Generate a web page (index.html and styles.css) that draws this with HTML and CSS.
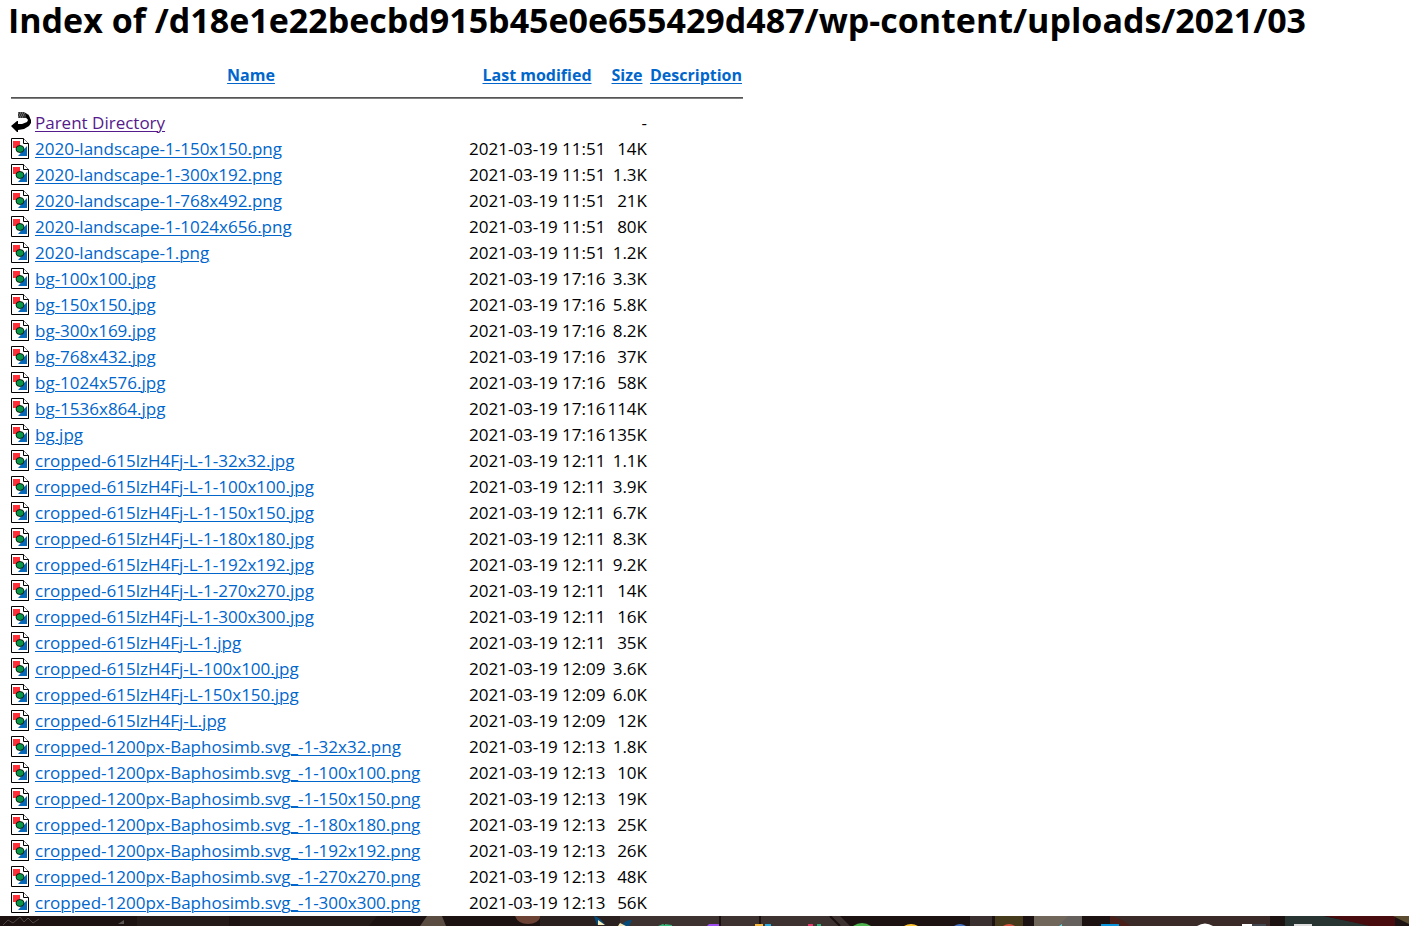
FILE: index.html
```
<!DOCTYPE html>
<html lang="en">
<head>
<meta charset="utf-8">
<title>Index of /d18e1e22becbd915b45e0e655429d487/wp-content/uploads/2021/03</title>
<link rel="stylesheet" href="styles.css">
</head>
<body>
<svg class="sprite" aria-hidden="true">
<symbol id="img" viewBox="0 0 20 22">
<path d="M.5.5h12l5 5v15H.5z" fill="#fff" stroke="#000"/>
<path d="M17.500 6v14.500H1" fill="none" stroke="#000"/>
<path d="M12.500.5v5h5" fill="#fff" stroke="#000"/>
<path d="M2 3h7v7H2z" fill="#ff3038"/>
<path d="M16 8v10H7z" fill="#0868b8"/>
<ellipse cx="9" cy="11" rx="4" ry="3.500" fill="#089848" stroke="#000" stroke-width=".8"/>
</symbol>
<symbol id="back" viewBox="0 0 20 22">
<path d="M7 0h6l5 3 1 5-4-2H7z" fill="#333"/>
<path d="M7 1h1m1 0h1m1 0h1m1 0h1M8 3h1m1 0h1m1 0h1m1 0h1M7 5h1m1 0h1m1 0h1" stroke="#999"/>
<path d="M14 1l4 3 2 4v3l-2 3-5 3-6 1v2H6l-6-6 6-5h1v3h4l5-2 1-2-2-3z" fill="#000"/>
</symbol>
</svg>
<main>
<h1>Index of /d18e1e22becbd915b45e0e655429d487/wp-content/uploads/2021/03</h1>
<table>
<colgroup><col class="c-icon"><col class="c-name"><col class="c-date"><col class="c-size"><col class="c-desc"></colgroup>
<thead>
<tr><th></th><th><a href="#name">Name</a></th><th><a href="#modified">Last modified</a></th><th><a href="#size">Size</a></th><th><a href="#description">Description</a></th></tr>
<tr><td colspan="5"><hr></td></tr>
</thead>
<tbody>
<tr><td><svg><use href="#back"/></svg></td><td><a class="visited" href="#parent">Parent Directory</a></td><td></td><td>-</td><td></td></tr>
<tr><td><svg><use href="#img"/></svg></td><td><a href="#f">2020-landscape-1-150x150.png</a></td><td>2021-03-19 11:51</td><td>14K</td><td></td></tr>
<tr><td><svg><use href="#img"/></svg></td><td><a href="#f">2020-landscape-1-300x192.png</a></td><td>2021-03-19 11:51</td><td>1.3K</td><td></td></tr>
<tr><td><svg><use href="#img"/></svg></td><td><a href="#f">2020-landscape-1-768x492.png</a></td><td>2021-03-19 11:51</td><td>21K</td><td></td></tr>
<tr><td><svg><use href="#img"/></svg></td><td><a href="#f">2020-landscape-1-1024x656.png</a></td><td>2021-03-19 11:51</td><td>80K</td><td></td></tr>
<tr><td><svg><use href="#img"/></svg></td><td><a href="#f">2020-landscape-1.png</a></td><td>2021-03-19 11:51</td><td>1.2K</td><td></td></tr>
<tr><td><svg><use href="#img"/></svg></td><td><a href="#f">bg-100x100.jpg</a></td><td>2021-03-19 17:16</td><td>3.3K</td><td></td></tr>
<tr><td><svg><use href="#img"/></svg></td><td><a href="#f">bg-150x150.jpg</a></td><td>2021-03-19 17:16</td><td>5.8K</td><td></td></tr>
<tr><td><svg><use href="#img"/></svg></td><td><a href="#f">bg-300x169.jpg</a></td><td>2021-03-19 17:16</td><td>8.2K</td><td></td></tr>
<tr><td><svg><use href="#img"/></svg></td><td><a href="#f">bg-768x432.jpg</a></td><td>2021-03-19 17:16</td><td>37K</td><td></td></tr>
<tr><td><svg><use href="#img"/></svg></td><td><a href="#f">bg-1024x576.jpg</a></td><td>2021-03-19 17:16</td><td>58K</td><td></td></tr>
<tr><td><svg><use href="#img"/></svg></td><td><a href="#f">bg-1536x864.jpg</a></td><td>2021-03-19 17:16</td><td>114K</td><td></td></tr>
<tr><td><svg><use href="#img"/></svg></td><td><a href="#f">bg.jpg</a></td><td>2021-03-19 17:16</td><td>135K</td><td></td></tr>
<tr><td><svg><use href="#img"/></svg></td><td><a href="#f">cropped-615lzH4Fj-L-1-32x32.jpg</a></td><td>2021-03-19 12:11</td><td>1.1K</td><td></td></tr>
<tr><td><svg><use href="#img"/></svg></td><td><a href="#f">cropped-615lzH4Fj-L-1-100x100.jpg</a></td><td>2021-03-19 12:11</td><td>3.9K</td><td></td></tr>
<tr><td><svg><use href="#img"/></svg></td><td><a href="#f">cropped-615lzH4Fj-L-1-150x150.jpg</a></td><td>2021-03-19 12:11</td><td>6.7K</td><td></td></tr>
<tr><td><svg><use href="#img"/></svg></td><td><a href="#f">cropped-615lzH4Fj-L-1-180x180.jpg</a></td><td>2021-03-19 12:11</td><td>8.3K</td><td></td></tr>
<tr><td><svg><use href="#img"/></svg></td><td><a href="#f">cropped-615lzH4Fj-L-1-192x192.jpg</a></td><td>2021-03-19 12:11</td><td>9.2K</td><td></td></tr>
<tr><td><svg><use href="#img"/></svg></td><td><a href="#f">cropped-615lzH4Fj-L-1-270x270.jpg</a></td><td>2021-03-19 12:11</td><td>14K</td><td></td></tr>
<tr><td><svg><use href="#img"/></svg></td><td><a href="#f">cropped-615lzH4Fj-L-1-300x300.jpg</a></td><td>2021-03-19 12:11</td><td>16K</td><td></td></tr>
<tr><td><svg><use href="#img"/></svg></td><td><a href="#f">cropped-615lzH4Fj-L-1.jpg</a></td><td>2021-03-19 12:11</td><td>35K</td><td></td></tr>
<tr><td><svg><use href="#img"/></svg></td><td><a href="#f">cropped-615lzH4Fj-L-100x100.jpg</a></td><td>2021-03-19 12:09</td><td>3.6K</td><td></td></tr>
<tr><td><svg><use href="#img"/></svg></td><td><a href="#f">cropped-615lzH4Fj-L-150x150.jpg</a></td><td>2021-03-19 12:09</td><td>6.0K</td><td></td></tr>
<tr><td><svg><use href="#img"/></svg></td><td><a href="#f">cropped-615lzH4Fj-L.jpg</a></td><td>2021-03-19 12:09</td><td>12K</td><td></td></tr>
<tr><td><svg><use href="#img"/></svg></td><td><a href="#f">cropped-1200px-Baphosimb.svg_-1-32x32.png</a></td><td>2021-03-19 12:13</td><td>1.8K</td><td></td></tr>
<tr><td><svg><use href="#img"/></svg></td><td><a href="#f">cropped-1200px-Baphosimb.svg_-1-100x100.png</a></td><td>2021-03-19 12:13</td><td>10K</td><td></td></tr>
<tr><td><svg><use href="#img"/></svg></td><td><a href="#f">cropped-1200px-Baphosimb.svg_-1-150x150.png</a></td><td>2021-03-19 12:13</td><td>19K</td><td></td></tr>
<tr><td><svg><use href="#img"/></svg></td><td><a href="#f">cropped-1200px-Baphosimb.svg_-1-180x180.png</a></td><td>2021-03-19 12:13</td><td>25K</td><td></td></tr>
<tr><td><svg><use href="#img"/></svg></td><td><a href="#f">cropped-1200px-Baphosimb.svg_-1-192x192.png</a></td><td>2021-03-19 12:13</td><td>26K</td><td></td></tr>
<tr><td><svg><use href="#img"/></svg></td><td><a href="#f">cropped-1200px-Baphosimb.svg_-1-270x270.png</a></td><td>2021-03-19 12:13</td><td>48K</td><td></td></tr>
<tr><td><svg><use href="#img"/></svg></td><td><a href="#f">cropped-1200px-Baphosimb.svg_-1-300x300.png</a></td><td>2021-03-19 12:13</td><td>56K</td><td></td></tr>
</tbody>
</table>
</main>
<footer>
<svg class="taskbar" viewBox="0 0 1409 10" preserveAspectRatio="none" aria-hidden="true">
<path d="M0 0h1409v10H0z" fill="#1c1212"/>
<path d="M137 0h92v10h-92zM240 0h137l-8 10H240z" fill="#241a18"/>
<path d="M427 0h15l4 10h-26z" fill="#5a4c40"/>
<path d="M515 0h26q-3 8-13 8t-13-8z" fill="#6b4233"/>
<path d="M540 0h80v10h-80z" fill="#2b2020"/>
<path d="M620 0h220l10 10H620z" fill="#3d3230"/>
<path d="M720 0v10M760 0v10M830 0l10 10" stroke="#1a1010" stroke-width="2"/>
<path d="M970 0h22v10h-22z" fill="#3b3030"/>
<path d="M995 0h28v10h-28z" fill="#463a1c"/>
<path d="M1034 0h48v10h-48z" fill="#70665a"/>
<path d="M1068 0h14v10h-24z" fill="#66605c"/>
<path d="M1110 0h160v10h-150z" fill="#3a2a28"/>
<path d="M1110 0q14 3 20 10h-20z" fill="#4a1f1a"/>
<path d="M1285 0h38l50 10h-88z" fill="#273432"/>
<path d="M1325 0h70v10h-25z" fill="#480c0e"/>
<path d="M1393 0h16v8z" fill="#5c4c30"/>
<path d="M3 9l5-5 5 3 7-6 4 5 4-4 5 5 6-4" fill="none" stroke="#4d4444"/>
<path d="M118 8l6-4v4z" fill="#5a5555"/>
<path d="M594 0q7 2 11 9h-8zM622 9q3-5 10-5l-3 6h-7z" fill="#064a78"/>
<path d="M598 4l7 5h-7zM620 7l6 3h-8z" fill="#f5e9b8"/>
<path d="M658 10l5-2 3 2zM665 8l7 1v1h-7z" fill="#35b877"/>
<path d="M709 8h10v2h-12z" fill="#9d4af0"/>
<path d="M755 8h8v2h-8z" fill="#f5b83d"/>
<path d="M765 8h6v2h-6z" fill="#28a9d8"/>
<path d="M808 8h5v2h-5z" fill="#df3867"/>
<path d="M817 8h4v2h-4z" fill="#35a978"/>
<path d="M853 10q9-6 18 0z" fill="#4db34d"/>
<path d="M904 10q7-4 14 0z" fill="#ffc42e"/>
<path d="M954 10q6-4 12 0z" fill="#4372c4"/>
<path d="M1003 10q6-4 12 0z" fill="#d8533e"/>
<path d="M1059 10l3-2v2z" fill="#63d5dc"/>
<path d="M1101 8h18v2h-18z" fill="#0794dc"/>
<path d="M1197 10q8-5 16 0z" fill="#fff"/>
<path d="M1242 8h10v2h-10z" fill="#fff"/>
<path d="M1252 8h14v2h-14z" fill="#42464e"/>
<path d="M1294 8h18v2h-18z" fill="#ddd"/>
</svg>
</footer>
</body>
</html>
```
FILE: styles.css
```
body {
  margin: 0;
  min-height: 100vh;
  display: flex;
  flex-direction: column;
  background: #fff;
  color: #000;
  font: 17px/24px "Segoe UI", "Open Sans", sans-serif;
}
main {
  flex: 1;
}
h1 {
  margin: 0 8px 21px;
  font-size: 34px;
  line-height: 40px;
  white-space: nowrap;
}
table {
  table-layout: fixed;
  width: 736px;
  margin: 0 9px -2px;
  border-spacing: 2px;
}
.c-icon { width: 22px; }
.c-name { width: 432px; }
.c-date { width: 136px; }
.c-size { width: 40px; }
.c-desc { width: 94px; }
th, td {
  padding: 0;
  height: 24px;
  white-space: nowrap;
}
th { font-size: 16px; }
thead td { height: 20px; }
td:nth-child(n+3) { text-align: right; }
a {
  color: #0066cc;
  text-underline-offset: 2px;
  text-decoration-thickness: 1px;
}
.visited { color: #551a8b; }
hr {
  margin: 7px 0 10px;
  border: 1px solid;
  border-color: #555 #808080 #808080 #555;
  border-width: 1px 0;
}
td svg {
  display: block;
  width: 20px;
  height: 22px;
}
.sprite { display: none; }
footer {
  height: 10px;
  flex: none;
}
.taskbar {
  display: block;
  width: 100%;
  height: 10px;
}
```
